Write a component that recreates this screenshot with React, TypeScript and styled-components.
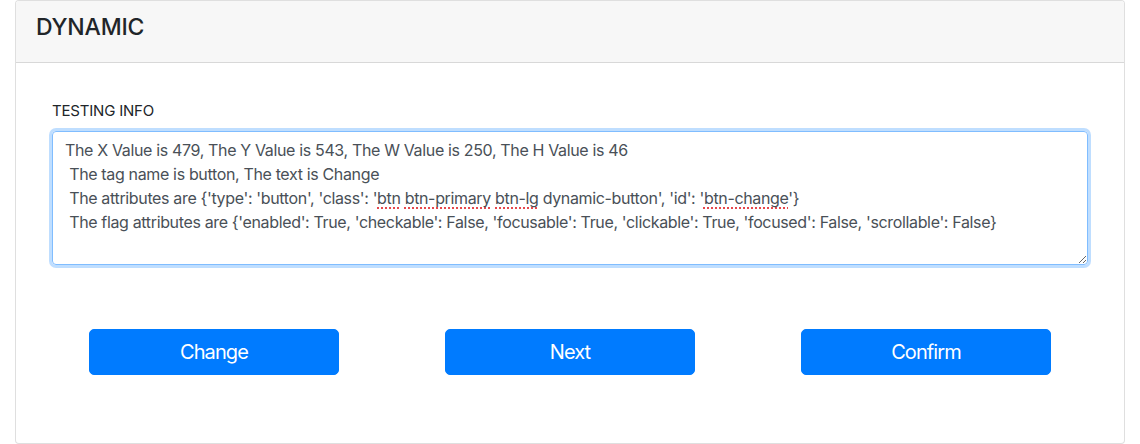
import React from "react";
import styled, { createGlobalStyle } from "styled-components";

const Global = createGlobalStyle`
  html, body { margin: 0; padding: 0; background: #fff; }
  body { font-family: Inter, "Liberation Sans", Arial, sans-serif; color: #212529; }
  * { box-sizing: border-box; }
`;

const Page = styled.div`
  padding: 0 15px;
`;

const Card = styled.section`
  border: 1px solid rgba(0, 0, 0, 0.125);
  border-radius: 4px;
  background: #fff;
  overflow: hidden;
`;

const Header = styled.header`
  background: #f7f7f7;
  border-bottom: 1px solid rgba(0, 0, 0, 0.125);
  padding: 13px 20px 22px;
`;

const Title = styled.h5`
  margin: 0;
  font-size: 23px;
  line-height: 26px;
  font-weight: 500;
  letter-spacing: -0.2px;
  color: #212529;
`;

const Body = styled.div`
  padding: 37px 20px 68px;
`;

const Field = styled.div`
  padding: 0 16px;
  display: flex;
  flex-direction: column;
  gap: 9px;
`;

const Label = styled.label`
  font-size: 15px;
  line-height: 22px;
  letter-spacing: -0.2px;
  color: #212529;
`;

const InfoBox = styled.div`
  height: 134px;
  padding: 6px 12px;
  border: 1px solid #80bdff;
  border-radius: 4px;
  box-shadow: 0 0 0 3px rgba(0, 123, 255, 0.25);
  font-size: 16px;
  line-height: 24px;
  letter-spacing: -0.35px;
  color: #495057;
  white-space: pre;
  overflow: auto;
  resize: vertical;
`;

const Misspelt = styled.span`
  text-decoration: underline dotted #e5484d;
  text-decoration-thickness: 2px;
  text-underline-offset: 3px;
`;

const Actions = styled.div`
  margin-top: 64px;
  display: grid;
  grid-template-columns: repeat(3, 1fr);
  justify-items: center;
`;

const Button = styled.button`
  width: 250px;
  height: 46px;
  border: 1px solid #007bff;
  border-radius: 5px;
  background: #007bff;
  color: #fff;
  font-family: inherit;
  font-size: 20px;
  line-height: 1.5;
  letter-spacing: -0.9px;
  cursor: pointer;
`;

export default function App() {
  return (
    <>
      <Global />
      <Page>
        <Card>
          <Header>
            <Title>DYNAMIC</Title>
          </Header>
          <Body>
            <Field>
              <Label>TESTING INFO</Label>
              <InfoBox role="textbox" aria-multiline="true">
                {"The X Value is 479, The Y Value is 543, The W Value is 250, The H Value is 46\n"}
                {" The tag name is button, The text is Change\n"}
                {" The attributes are {'type': 'button', 'class': '"}
                <Misspelt>btn</Misspelt> <Misspelt>btn-primary</Misspelt> <Misspelt>btn-lg</Misspelt>
                {" dynamic-button', 'id': '"}
                <Misspelt>btn-change</Misspelt>
                {"'}\n"}
                {" The flag attributes are {'enabled': True, 'checkable': False, 'focusable': True, 'clickable': True, 'focused': False, 'scrollable': False}"}
              </InfoBox>
            </Field>
            <Actions>
              <Button type="button">Change</Button>
              <Button type="button">Next</Button>
              <Button type="button">Confirm</Button>
            </Actions>
          </Body>
        </Card>
      </Page>
    </>
  );
}
